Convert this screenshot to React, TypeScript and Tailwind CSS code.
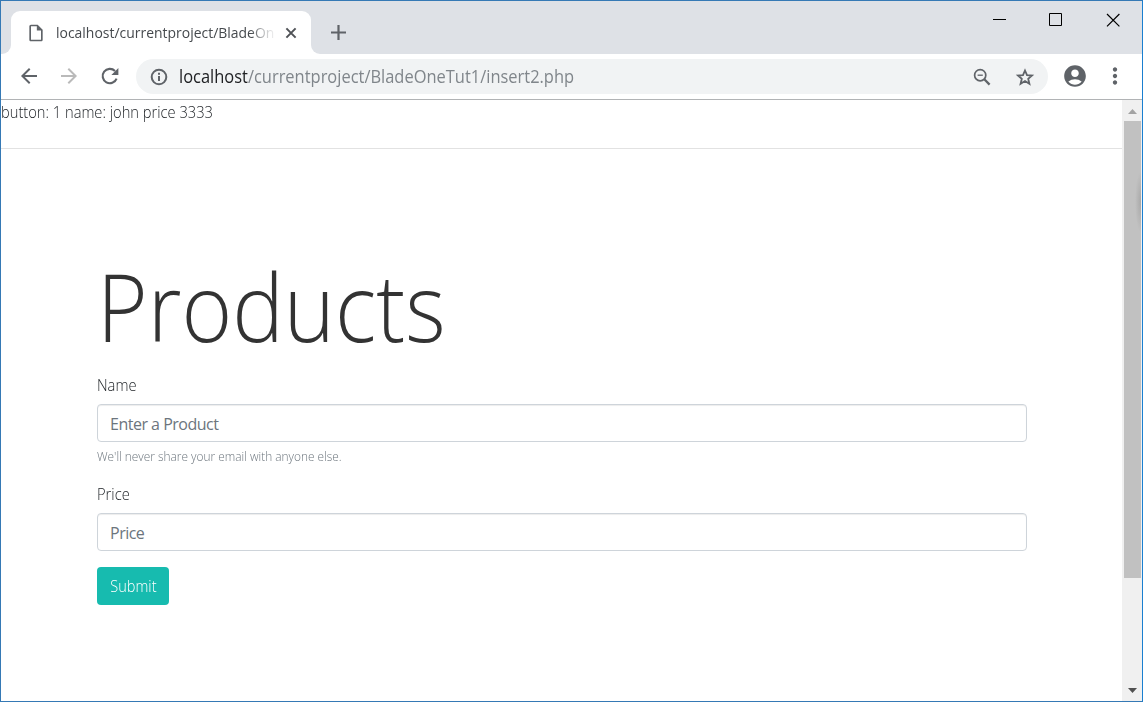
import React from 'react';
import {
  MdAccountCircle,
  MdArrowBack,
  MdArrowForward,
  MdMoreVert,
  MdOutlineInsertDriveFile,
} from 'react-icons/md';

function TabStrip() {
  return (
    <div className="flex h-[53px] shrink-0 items-start bg-[#dee1e6]">
      <div className="flex h-[53px] w-[10px] items-end bg-white">
        <div className="h-full w-full rounded-br-[9px] bg-[#dee1e6]" />
      </div>
      <div className="flex h-[53px] w-[300px] flex-col">
        <div className="h-[10px] bg-[#dee1e6]" />
        <div className="flex flex-1 items-center rounded-t-[9px] bg-white pl-[15px]">
          <MdOutlineInsertDriveFile className="h-[20px] w-[20px] shrink-0 text-[#5f6368]" />
          <div className="mb-px ml-[10px] w-[219px] whitespace-nowrap text-[15px] leading-[20px] text-[#45494d] [mask-image:linear-gradient(to_right,black_89%,rgba(0,0,0,0.4)_94%,transparent_101%)]">
            <span className="inline-block origin-left scale-x-[0.93]">localhost/currentproject/BladeOn</span>
          </div>
          <svg className="ml-[10px] h-[12px] w-[12px] shrink-0" viewBox="0 0 12 12" stroke="#4f5256" strokeWidth="2">
            <path d="M1.4 1.4 10.6 10.6M10.6 1.4 1.4 10.6" />
          </svg>
        </div>
      </div>
      <div className="h-[53px] w-[10px] bg-white">
        <div className="h-full w-full rounded-bl-[9px] bg-[#dee1e6]" />
      </div>
      <svg className="ml-[9px] mt-[23px] h-[16px] w-[16px]" viewBox="0 0 16 16" stroke="#5f6368" strokeWidth="2.2">
        <path d="M1 8.5H16M8.5 1V16" />
      </svg>
      <svg className="ml-auto mr-[21px] mt-[10px] h-[18px] w-[130px]" viewBox="0 0 130 18" fill="none" stroke="#000" strokeWidth="1">
        <path d="M2 8.5H15M58.5 2.5H70.5V14.5H58.5Z" />
        <path d="M116 3 128.4 15.4M128.4 3 116 15.4" strokeWidth="1.2" />
      </svg>
    </div>
  );
}

function Toolbar() {
  return (
    <div className="flex h-[46px] shrink-0 items-center border-b border-[#b1b3b5] bg-white pl-[16px] text-[#5f6368]">
      <MdArrowBack className="mb-[2px] h-[24px] w-[24px]" />
      <MdArrowForward className="mb-[2px] ml-[16px] h-[24px] w-[24px] text-[#bababa]" />
      <svg className="mb-[2px] ml-[19px] h-[20px] w-[20px]" viewBox="0 0 20 20" fill="none" stroke="#5f6368" strokeWidth="2.1">
        <path d="M16.6 12.6A7.2 7.2 0 1 1 15 5" />
        <path d="M18.4 2V9H11.4Z" fill="#5f6368" stroke="none" />
      </svg>
      <div className="ml-[16px] flex h-[35px] w-[912px] items-center rounded-full bg-[#f1f3f4] pl-[14px] pr-[13px]">
        <svg className="h-[18px] w-[18px]" viewBox="0 0 18 18" fill="none" stroke="#5f6368" strokeWidth="2">
          <circle cx="9" cy="9" r="7.3" />
          <path d="M9 8V13M9 4.8V6.8" />
        </svg>
        <div className="mb-[2px] ml-[11px] h-[24px] w-[420px] whitespace-nowrap text-[18px] leading-[24px] text-[#80868b]">
          <span className="inline-block origin-left scale-x-[0.914]">
            <span className="text-[#202124]">localhost</span>/currentproject/BladeOneTut1/insert2.php
          </span>
        </div>
        <svg className="ml-auto h-[18px] w-[18px]" viewBox="0 0 18 18" fill="none" stroke="#5f6368" strokeWidth="1.7">
          <circle cx="7.2" cy="7.2" r="5.6" />
          <path d="M4.6 7.2H9.8" strokeWidth="1.3" />
          <path d="M11.3 11.3 16.6 16.6" strokeWidth="2.3" />
        </svg>
        <svg className="ml-[24px] h-[20px] w-[20px]" viewBox="0 0 20 20" fill="none" stroke="#5f6368" strokeWidth="1.8">
          <path d="M10 3.5 12 8.1 17 8.5 13.2 11.8 14.4 16.8 10 14.1 5.6 16.8 6.8 11.8 3 8.5 8 8.1Z" />
        </svg>
      </div>
      <MdAccountCircle className="mb-px ml-[14px] h-[26px] w-[26px]" />
      <MdMoreVert className="mb-[2px] ml-[14px] h-[26px] w-[26px]" />
    </div>
  );
}

function Field({ label, placeholder }: { label: string; placeholder: string }) {
  return (
    <>
      <label className="block h-[31px] text-[16px] leading-[24px] font-light text-[#212529]">
        <span className="inline-block origin-left scale-x-[0.92]">{label}</span>
      </label>
      <input
        className="block h-[38px] w-[930px] rounded-[4px] border border-[#ced4da] bg-white px-[12px] pt-[2px] text-[16px] tracking-[-0.5px] shadow-[inset_0_1px_1px_rgba(0,0,0,0.075)] outline-none placeholder:text-[#6c757d]"
        placeholder={placeholder}
      />
    </>
  );
}

function Scrollbar() {
  return (
    <div className="flex w-[20px] shrink-0 flex-col items-end bg-[#f0f0f0] pr-px">
      <div className="flex h-[21px] w-[17px] items-center justify-center pt-px">
        <svg className="h-[5px] w-[9px]" viewBox="0 0 9 5" fill="#a3a3a3"><path d="M0 5 4.5 0 9 5Z" /></svg>
      </div>
      <div className="flex h-[457px] w-[17px] items-start justify-end bg-[#c1c1c1]">
        <div className="mt-[50px] h-[62px] w-[6px] bg-[radial-gradient(ellipse_at_right,#a8a8a8,#c1c1c1_70%)]" />
      </div>
      <div className="mt-auto flex h-[21px] w-[17px] items-center justify-center">
        <svg className="h-[5px] w-[9px]" viewBox="0 0 9 5" fill="#505050"><path d="M0 0 4.5 5 9 0Z" /></svg>
      </div>
    </div>
  );
}

export default function App() {
  return (
    <div className="flex h-[702px] w-[1143px] flex-col overflow-hidden border border-[#3579b5] border-r-[#1a7fd0] bg-white font-['Open_Sans','Noto_Sans',sans-serif]">
      <TabStrip />
      <Toolbar />
      <div className="flex min-h-0 flex-1">
        <main className="min-w-0 flex-1">
          <div className="h-[49px] whitespace-nowrap border-b border-[#e2e2e2] text-[16px] leading-[25px] font-light text-[#212529]">
            <span className="inline-block origin-left scale-x-[0.917]">button: 1 name: john price 3333</span>
          </div>
          <form className="ml-[96px] w-[930px] pt-[102px]" onSubmit={(e) => e.preventDefault()}>
            <h1 className="h-[122px] whitespace-nowrap text-[94px] leading-[110px] font-light text-[#333]">
              <span className="inline-block origin-left scale-x-[0.922]">Products</span>
            </h1>
            <Field label="Name" placeholder="Enter a Product" />
            <div className="mb-[16px] mt-[4px] h-[20px] text-[13px] leading-[20px] font-light text-[#6c757d]">
              <span className="inline-block origin-left scale-x-[0.913]">We'll never share your email with anyone else.</span>
            </div>
            <Field label="Price" placeholder="Price" />
            <button className="mt-[16px] flex h-[38px] w-[72px] items-center justify-center rounded-[4px] bg-[#17bbaf] text-[16px] font-light text-white">
              <span className="inline-block scale-x-[0.91]">Submit</span>
            </button>
          </form>
        </main>
        <Scrollbar />
      </div>
    </div>
  );
}
